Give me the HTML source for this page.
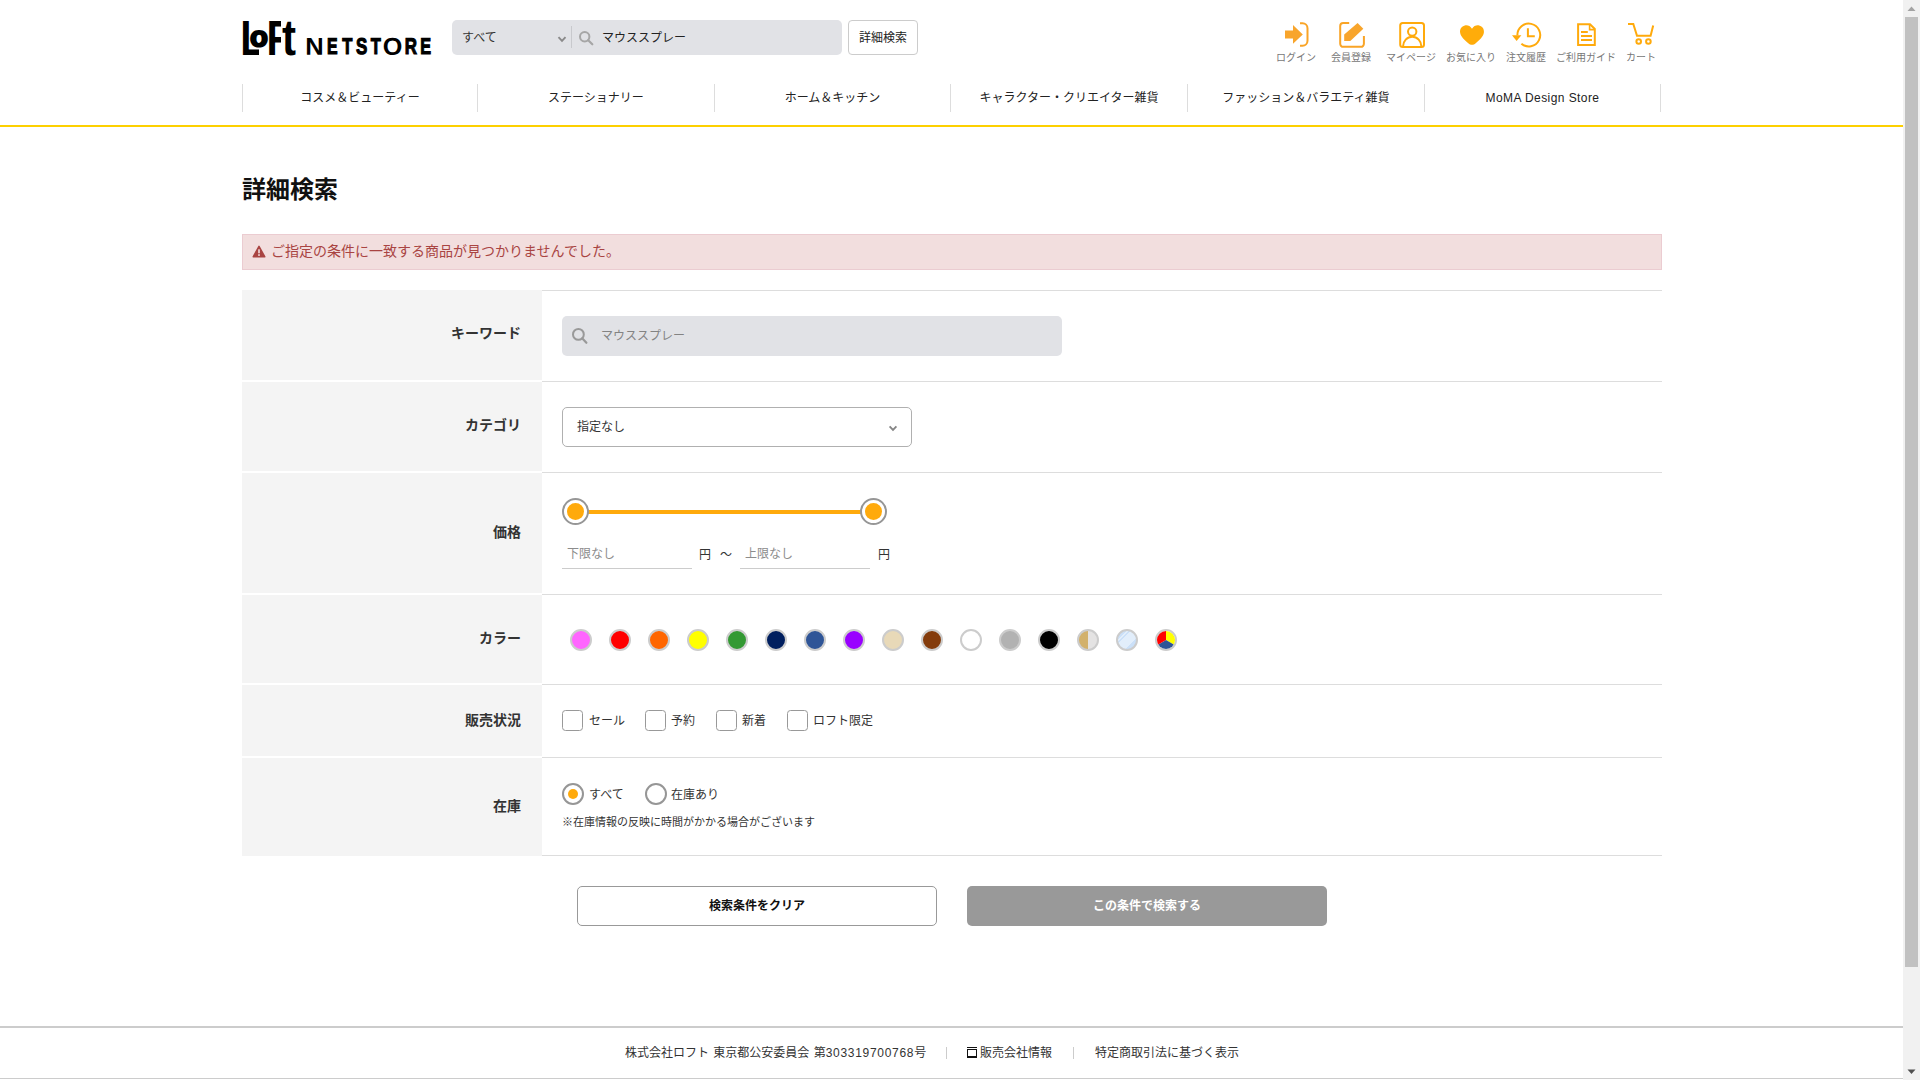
<!DOCTYPE html>
<html lang="ja">
<head>
<meta charset="utf-8">
<title>詳細検索 | LOFT NETSTORE</title>
<style>
*{box-sizing:border-box;margin:0;padding:0}
html,body{width:1920px;height:1080px;overflow:hidden;background:#fff}
body{position:relative;font-family:"Liberation Sans","Noto Sans CJK JP",sans-serif;color:#333;font-size:13px}
.abs{position:absolute}
.t{position:absolute;white-space:nowrap;line-height:1}
/* header */
#logo{left:242px;top:18px;width:192px;height:42px}
#sbar{left:452px;top:20px;width:390px;height:35px;background:#e1e2e6;border-radius:5px}
#sbar .sep{position:absolute;left:119px;top:6px;width:1px;height:22px;background:#c8c9cd}
#dbtn{left:848px;top:20px;width:70px;height:35px;border:1px solid #ccc;border-radius:4px;background:#fff;font-size:12px;color:#222;text-align:center;line-height:35px}
.hi{position:absolute;top:20px;width:60px;text-align:center}
.hi svg{display:block;margin:0 auto;width:30px;height:28px}
.hi span{display:block;font-size:10px;color:#777;line-height:1;margin-top:4px;white-space:nowrap}
.hl{position:absolute;top:53px;width:100px;text-align:center;font-size:10px;line-height:10px;color:#777;white-space:nowrap}
/* nav */
.nv{position:absolute;top:84px;height:28px;border-left:1px solid #ddd;text-align:center;font-size:12px;line-height:28px;color:#222}
#yl{left:0;top:125px;width:1903px;height:2px;background:#fdd000}
/* title */
#ttl{left:242px;top:178px;font-size:24px;font-weight:bold;color:#111;letter-spacing:0}
#alert{left:242px;top:234px;width:1420px;height:36px;background:#f2dede;border:1px solid #ebccd1;color:#a94442;font-size:14px;line-height:32px;padding-left:28px}
/* table */
.lb{position:absolute;left:242px;width:300px;background:#f4f4f4;text-align:right;padding-right:21px;font-weight:bold;font-size:15px;color:#333}
.ln{position:absolute;left:542px;width:1120px;height:1px;background:#ddd}
.lbl{position:absolute;left:242px;width:279px;text-align:right;font-weight:bold;font-size:14px;color:#333;line-height:1;white-space:nowrap}
.sw{position:absolute;top:629px;width:22px;height:22px;border-radius:50%;border:2px solid #ccc}
.hd{position:absolute;width:27px;height:27px;border-radius:50%;border:2px solid #969696;background:#fff}
.hd i{position:absolute;left:3px;top:3px;width:17px;height:17px;border-radius:50%;background:#ffaa0c}
.cb{position:absolute;top:710px;width:21px;height:21px;border:1px solid #999;border-radius:3.5px;background:#fff}
.rd{position:absolute;top:783px;width:22px;height:22px;border:2px solid #969696;border-radius:50%;background:#fff}
.rd i{position:absolute;left:4px;top:4px;width:10px;height:10px;border-radius:50%;background:#ffaa0c}
/* buttons */
#bclr{left:577px;top:886px;width:360px;height:40px;border:1px solid #999;border-radius:5px;background:#fff;text-align:center;line-height:38px;font-weight:bold;font-size:12px;color:#111}
#bsrc{left:967px;top:886px;width:360px;height:40px;border-radius:5px;background:#999;text-align:center;line-height:40px;font-weight:bold;font-size:12px;color:#fff}
/* footer */
#ft1{left:0;top:1026px;width:1903px;height:2px;background:#ccc}
#ft2{left:0;top:1078px;width:1903px;height:1px;background:#ccc}
.ftx{position:absolute;top:1047px;font-size:12px;line-height:1;color:#333;white-space:nowrap}
/* scrollbar */
#sb{left:1903px;top:0;width:17px;height:1080px;background:#f1f1f1}
#sbt{left:1905px;top:17px;width:13px;height:950px;background:#c1c1c1}
</style>
</head>
<body>

<!-- HEADER -->
<div id="hdr">
<svg class="abs" id="logo" role="img" aria-label="LoFt NETSTORE" viewBox="0 0 192 42" style="left:242px;top:18px;width:192px;height:42px;overflow:visible">
<title>LoFt NETSTORE</title>
<g font-family="'Liberation Sans',sans-serif" font-weight="bold" fill="#000" stroke="#000">
<clipPath id="c0"><rect x="0.00" y="0" width="17.00" height="42"/></clipPath><g clip-path="url(#c0)"><text transform="translate(-1.79 36.90) rotate(0.03) scale(2.0140 2.4710)" font-size="20" stroke-width="0">L</text></g>
<text transform="translate(8.08 28.33) rotate(0.03) scale(1.4684 1.4161)" font-size="20" stroke-width="1.4">o</text>
<clipPath id="c2"><rect x="26.00" y="0" width="12.90" height="42"/></clipPath><g clip-path="url(#c2)"><text transform="translate(24.51 36.90) rotate(0.03) scale(2.0140 2.4710)" font-size="20" stroke-width="0">F</text></g>
<text transform="translate(40.09 37.15) rotate(0.03) scale(2.1000 2.5500)" font-size="20" stroke-width="0">t</text>
<text transform="translate(63.19 36.80) rotate(0.03) scale(1.2757 1.2209)" font-size="20" stroke-width="0">N</text>
<text transform="translate(84.93 36.23) rotate(0.03) scale(0.7938 1.1382)" font-size="20" stroke-width="1">E</text>
<text transform="translate(100.13 36.23) rotate(0.03) scale(0.8296 1.1382)" font-size="20" stroke-width="1">T</text>
<text transform="translate(114.04 36.21) rotate(0.03) scale(0.8475 1.1382)" font-size="20" stroke-width="1">S</text>
<text transform="translate(128.63 36.23) rotate(0.03) scale(0.8217 1.1382)" font-size="20" stroke-width="1">T</text>
<text transform="translate(140.87 36.76) rotate(0.03) scale(1.2594 1.2209)" font-size="20" stroke-width="0">O</text>
<text transform="translate(162.69 36.23) rotate(0.03) scale(0.8470 1.1382)" font-size="20" stroke-width="1">R</text>
<text transform="translate(178.32 36.23) rotate(0.03) scale(0.8101 1.1382)" font-size="20" stroke-width="1">E</text>
</g>
</svg>
<div class="abs" id="sbar">
 <div class="t" style="left:10px;top:12px;font-size:12px;color:#333">すべて</div>
 <svg class="abs" style="left:104px;top:15px" width="12" height="9" viewBox="0 0 12 9"><path d="M2.5 2.2 L6 5.8 L9.5 2.2" fill="none" stroke="#8a8a8a" stroke-width="1.9"/></svg>
 <div class="sep"></div>
 <svg class="abs" style="left:126px;top:10px" width="17" height="17" viewBox="0 0 17 17"><circle cx="6.7" cy="6.7" r="4.7" fill="none" stroke="#a6a6a6" stroke-width="2"/><path d="M10.2 10.2 L14.3 14.3" stroke="#a6a6a6" stroke-width="2.2" stroke-linecap="round"/></svg>
 <div class="t" style="left:150px;top:12px;font-size:12px;color:#222">マウススプレー</div>
</div>
<div class="abs" id="dbtn">詳細検索</div>
<svg class="abs" style="left:1270px;top:18px" width="400" height="34" viewBox="1270 18 400 34" fill="none">
 <!-- login -->
 <path d="M1285 30.4 H1293 V25 L1302.8 34.4 L1293 43.8 V38.6 H1285 Z" fill="#f8a52c"/>
 <path d="M1300 23.2 H1302.5 A5 5 0 0 1 1307.5 28.2 V40.7 A5 5 0 0 1 1302.5 45.7 H1300" stroke="#f9a426" stroke-width="2"/>
 <!-- register -->
 <path d="M1349.2 23.1 H1343.2 A3 3 0 0 0 1340.2 26.1 V43.8 A3 3 0 0 0 1343.2 46.8 H1360.9 A3 3 0 0 0 1363.9 43.8 V36" stroke="#f9a426" stroke-width="2"/>
 <path d="M1357.6 22.9 L1363.3 28.8 L1350.3 41 H1344.2 V34.4 Z" fill="#f8a52c"/>
 <!-- mypage -->
 <rect x="1400.2" y="23" width="23.8" height="23.9" rx="2.5" stroke="#ffaa0c" stroke-width="2"/>
 <circle cx="1412.2" cy="31.6" r="4.2" stroke="#ffaa0c" stroke-width="2"/>
 <path d="M1403 46.5 A9.2 9.8 0 0 1 1421.4 46.5" stroke="#ffaa0c" stroke-width="2"/>
 <!-- heart -->
 <path d="M1472 28.7 C1470.3 25.7 1467.3 24.8 1464.8 25.4 C1461.5 26.2 1459.7 29.2 1460.1 32.4 C1460.6 36.5 1464.5 39.8 1468.3 43.2 C1470.5 45.3 1473.5 45.3 1475.7 43.2 C1479.5 39.8 1483.4 36.5 1483.9 32.4 C1484.3 29.2 1482.5 26.2 1479.2 25.4 C1476.7 24.8 1473.7 25.7 1472 28.7 Z" fill="#ffac0a"/>
 <!-- history -->
 <path d="M1517.4 35.4 A11.4 11.4 0 1 1 1521.4 43.7" stroke="#ffaa0c" stroke-width="2"/>
 <path d="M1512 35.2 H1521.4 L1516.6 41 Z" fill="#ffaa0c"/>
 <path d="M1527.9 28.2 V36.2 H1534.8" stroke="#ffaa0c" stroke-width="2"/>
 <!-- guide -->
 <path d="M1578.1 24.2 H1590 L1594.8 29 V45 H1578.1 Z" stroke="#ffaa0c" stroke-width="2"/>
 <path d="M1589.6 24.2 V29.6 H1594.8" stroke="#ffaa0c" stroke-width="1.6"/>
 <path d="M1581 32 H1587.8 M1581 36 H1592 M1581 40 H1592" stroke="#ffaa0c" stroke-width="2"/>
 <!-- cart -->
 <path d="M1628 24 H1633.3 L1637 35.8 H1650.6 L1653.2 25.4" stroke="#ffaa0c" stroke-width="2"/>
 <circle cx="1638.7" cy="41.5" r="2.3" stroke="#ffaa0c" stroke-width="2"/>
 <circle cx="1648.4" cy="41.5" r="2.3" stroke="#ffaa0c" stroke-width="2"/>
</svg>
<div class="hl" style="left:1246px">ログイン</div>
<div class="hl" style="left:1301px">会員登録</div>
<div class="hl" style="left:1361px">マイページ</div>
<div class="hl" style="left:1421px">お気に入り</div>
<div class="hl" style="left:1476px">注文履歴</div>
<div class="hl" style="left:1536px">ご利用ガイド</div>
<div class="hl" style="left:1591px">カート</div>
</div>

<!-- NAV -->
<div id="nav">
<div class="nv" style="left:242px;width:235px">コスメ＆ビューティー</div>
<div class="nv" style="left:477px;width:237px">ステーショナリー</div>
<div class="nv" style="left:714px;width:236px">ホーム＆キッチン</div>
<div class="nv" style="left:950px;width:237px">キャラクター・クリエイター雑貨</div>
<div class="nv" style="left:1187px;width:237px">ファッション＆バラエティ雑貨</div>
<div class="nv" style="left:1424px;width:237px;border-right:1px solid #ddd;letter-spacing:0.42px">MoMA Design Store</div>
</div>
<div class="abs" id="yl"></div>

<!-- MAIN -->
<div id="main">
<div class="t" id="ttl">詳細検索</div>
<div class="abs" id="alert"><svg class="abs" style="left:9px;top:10px" width="14" height="13" viewBox="0 0 14 13"><path d="M7 1.4 L12.8 11.8 H1.2 Z" fill="#a94442" stroke="#a94442" stroke-width="1.5" stroke-linejoin="round"/><rect x="6.2" y="4.3" width="1.6" height="4" fill="#f2dede"/><rect x="6.2" y="9.2" width="1.6" height="1.7" fill="#f2dede"/></svg>ご指定の条件に一致する商品が見つかりませんでした。</div>

<div class="lb" style="top:290px;height:90px"></div>
<div class="lb" style="top:382px;height:89px"></div>
<div class="lb" style="top:473px;height:120px"></div>
<div class="lb" style="top:595px;height:88px"></div>
<div class="lb" style="top:685px;height:71px"></div>
<div class="lb" style="top:758px;height:98px"></div>
<div class="ln" style="top:290px"></div>
<div class="ln" style="top:381px"></div>
<div class="ln" style="top:472px"></div>
<div class="ln" style="top:594px"></div>
<div class="ln" style="top:684px"></div>
<div class="ln" style="top:757px"></div>
<div class="ln" style="top:855px"></div>
<div class="lbl" style="top:326px">キーワード</div>
<div class="lbl" style="top:418px">カテゴリ</div>
<div class="lbl" style="top:525px">価格</div>
<div class="lbl" style="top:631px">カラー</div>
<div class="lbl" style="top:713px">販売状況</div>
<div class="lbl" style="top:799px">在庫</div>

<!-- keyword -->
<div class="abs" style="left:562px;top:316px;width:500px;height:40px;background:#e1e2e6;border-radius:5px"></div>
<svg class="abs" style="left:571px;top:327px" width="18" height="18" viewBox="0 0 18 18"><circle cx="7.4" cy="7.4" r="5.4" fill="none" stroke="#999" stroke-width="2"/><path d="M11.4 11.4 L15.4 15.8" stroke="#999" stroke-width="2.2" stroke-linecap="round"/></svg>
<div class="t" style="left:601px;top:330px;font-size:12px;color:#838383">マウススプレー</div>

<!-- category -->
<div class="abs" style="left:562px;top:407px;width:350px;height:40px;background:#fff;border:1px solid #b0b0b0;border-radius:5px"></div>
<div class="t" style="left:577px;top:421px;font-size:12px;color:#333">指定なし</div>
<svg class="abs" style="left:887px;top:424px" width="12" height="9" viewBox="0 0 12 9"><path d="M2.6 2.4 L6 5.8 L9.4 2.4" fill="none" stroke="#858585" stroke-width="1.9"/></svg>

<!-- price -->
<div class="abs" style="left:586px;top:510px;width:276px;height:4px;background:#ffaa0c"></div>
<div class="hd" style="left:562px;top:498px"><i></i></div>
<div class="hd" style="left:860px;top:498px"><i></i></div>
<div class="t" style="left:567px;top:548px;font-size:12px;color:#8c8c8c">下限なし</div>
<div class="abs" style="left:562px;top:568px;width:130px;height:1px;background:#ccc"></div>
<div class="t" style="left:699px;top:549px;font-size:12px;color:#333">円</div>
<div class="t" style="left:720px;top:549px;font-size:12px;color:#333">～</div>
<div class="t" style="left:745px;top:548px;font-size:12px;color:#8c8c8c">上限なし</div>
<div class="abs" style="left:740px;top:568px;width:130px;height:1px;background:#ccc"></div>
<div class="t" style="left:878px;top:549px;font-size:12px;color:#333">円</div>

<!-- colors -->
<div class="sw" style="left:570px;background:#ff66ff"></div>
<div class="sw" style="left:609px;background:#ff0000"></div>
<div class="sw" style="left:648px;background:#ff6600"></div>
<div class="sw" style="left:687px;background:#ffff00"></div>
<div class="sw" style="left:726px;background:#339933"></div>
<div class="sw" style="left:765px;background:#001f5f"></div>
<div class="sw" style="left:804px;background:#2f5597"></div>
<div class="sw" style="left:843px;background:#9900ff"></div>
<div class="sw" style="left:882px;background:#e8d9b8"></div>
<div class="sw" style="left:921px;background:#843c0c"></div>
<div class="sw" style="left:960px;background:#ffffff"></div>
<div class="sw" style="left:999px;background:#b2b2b2"></div>
<div class="sw" style="left:1038px;background:#000000"></div>
<div class="sw" style="left:1077px;background:linear-gradient(90deg,#d2b16c 0,#d2b16c 50%,#e4e3e3 50%)"></div>
<div class="sw" style="left:1116px;background:linear-gradient(135deg,#cbe0f8 0,#cbe0f8 24%,#e2eefb 24%,#e2eefb 30%,#cbe0f8 30%,#cbe0f8 36%,#e2eefb 36%,#e2eefb 70%,#cbe0f8 70%)"></div>
<div class="sw" style="left:1155px;overflow:hidden"><svg style="position:absolute;left:0;top:0" width="18" height="18" viewBox="-9 -9 18 18"><path d="M0 0 L0 -12 A12 12 0 0 1 10.39 6 Z" fill="#ffff00"/><path d="M0 0 L10.39 6 A12 12 0 0 1 -10.39 6 Z" fill="#2f5597"/><path d="M0 0 L-10.39 6 A12 12 0 0 1 0 -12 Z" fill="#ff0000"/></svg></div>

<!-- status -->
<div class="cb" style="left:562px"></div><div class="t" style="left:589px;top:715px;font-size:12px">セール</div>
<div class="cb" style="left:645px"></div><div class="t" style="left:671px;top:715px;font-size:12px">予約</div>
<div class="cb" style="left:716px"></div><div class="t" style="left:742px;top:715px;font-size:12px">新着</div>
<div class="cb" style="left:787px"></div><div class="t" style="left:813px;top:715px;font-size:12px">ロフト限定</div>

<!-- stock -->
<div class="rd" style="left:562px"><i></i></div><div class="t" style="left:589px;top:789px;font-size:12px">すべて</div>
<div class="rd" style="left:645px"></div><div class="t" style="left:671px;top:789px;font-size:12px">在庫あり</div>
<div class="t" style="left:562px;top:817px;font-size:11px;color:#333">※在庫情報の反映に時間がかかる場合がございます</div>

<div class="abs" id="bclr">検索条件をクリア</div>
<div class="abs" id="bsrc">この条件で検索する</div>
</div>

<!-- FOOTER -->
<div id="foot">
<div class="abs" id="ft1"></div>
<div class="ftx" style="left:625px;word-spacing:1px">株式会社ロフト 東京都公安委員会 第<span style="letter-spacing:0.7px">303319700768</span>号</div>
<div class="abs" style="left:946px;top:1047px;width:1px;height:12px;background:#ccc"></div>
<div class="abs" style="left:967px;top:1047px;width:10px;height:1px;background:#111"></div><div class="abs" style="left:967px;top:1049px;width:10px;height:9px;border:1px solid #111;border-bottom-width:2px"></div>
<div class="ftx" style="left:980px">販売会社情報</div>
<div class="abs" style="left:1073px;top:1047px;width:1px;height:12px;background:#ccc"></div>
<div class="ftx" style="left:1095px">特定商取引法に基づく表示</div>
<div class="abs" id="ft2"></div>
</div>

<!-- SCROLLBAR -->
<div class="abs" id="sb"></div>
<div class="abs" id="sbt"></div>
<svg class="abs" style="left:1903px;top:0" width="17" height="17" viewBox="0 0 17 17"><path d="M4.5 11 L8.5 6.5 L12.5 11 Z" fill="#a3a3a3"/></svg>
<svg class="abs" style="left:1903px;top:1063px" width="17" height="17" viewBox="0 0 17 17"><path d="M4.5 6.5 L12.5 6.5 L8.5 11 Z" fill="#505050"/></svg>

</body>
</html>
